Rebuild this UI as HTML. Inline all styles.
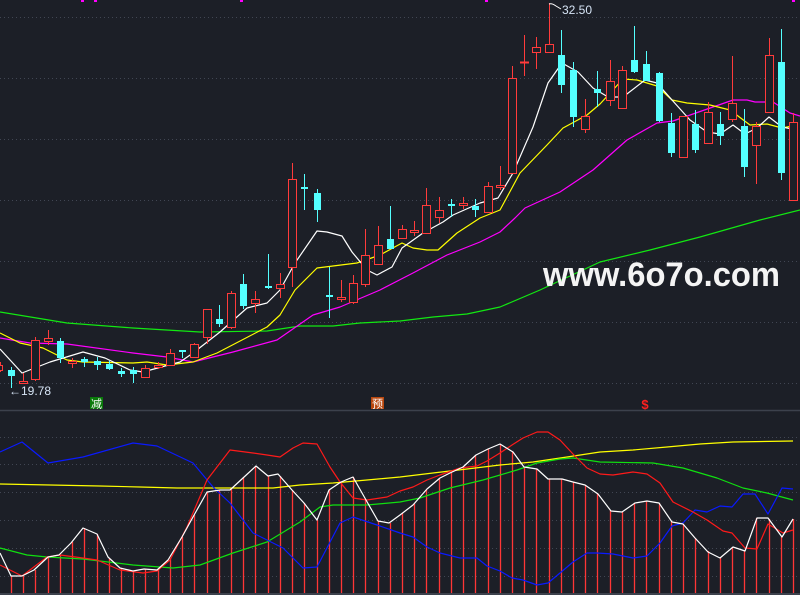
<!DOCTYPE html>
<html><head><meta charset="utf-8"><style>
html,body{margin:0;padding:0;background:#1c1f27;}
svg{display:block}
.g{stroke:#414653;stroke-width:1;stroke-dasharray:1 3}
.r line,.c line{stroke-width:1}
.r line{stroke:#ff3b3b}.r rect{fill:#1c1f27;stroke:#ff3b3b;stroke-width:1}
.c line{stroke:#54ffff}.c rect{fill:#54ffff}
.l{fill:none;stroke-width:1.2;stroke-linejoin:round}
.bars line{stroke:#ff3636;stroke-width:1.3}
</style></head><body>
<svg width="800" height="595" viewBox="0 0 800 595" xmlns="http://www.w3.org/2000/svg">
<rect width="800" height="595" fill="#1c1f27"/>
<g class="g">
<line x1="0" y1="17.5" x2="800" y2="17.5"/><line x1="0" y1="78.5" x2="800" y2="78.5"/><line x1="0" y1="139.5" x2="800" y2="139.5"/><line x1="0" y1="200.5" x2="800" y2="200.5"/><line x1="0" y1="261.5" x2="800" y2="261.5"/><line x1="0" y1="322.5" x2="800" y2="322.5"/><line x1="0" y1="383.5" x2="800" y2="383.5"/>
<line x1="0" y1="437.5" x2="800" y2="437.5"/><line x1="0" y1="464.5" x2="800" y2="464.5"/><line x1="0" y1="492.5" x2="800" y2="492.5"/><line x1="0" y1="520.5" x2="800" y2="520.5"/><line x1="0" y1="548.5" x2="800" y2="548.5"/><line x1="0" y1="576.5" x2="800" y2="576.5"/>
</g>
<line x1="0" y1="410.5" x2="800" y2="410.5" stroke="#3c414c" stroke-width="1.5"/>
<rect x="0" y="593" width="800" height="2" fill="#3c414c"/>
<g fill="#ff00ff"><rect x="81" y="0" width="3" height="2"/><rect x="94" y="0" width="3" height="2"/><rect x="240" y="0" width="3" height="2"/><rect x="485" y="0" width="3" height="2"/><rect x="792" y="0" width="3" height="2"/></g>

<polyline class="l" stroke="#12e812" points="0,312 67,323 133,328 200,332 267,331 300,326 333,326 360,323 400,321 433,317 467,314 500,307 540,290 600,262 650,250 700,237 760,220 800,210"/>
<polyline class="l" stroke="#ff00ff" points="0,338 30,343 67,344 133,353 167,357 193,362 233,352 277,340 313,315 340,307 380,290 413,273 447,255 480,242 500,232 515,218 525,208 560,192 593,170 627,140 657,123 673,121 713,107 733,100 747,100 755,102 773,102 790,113 800,116"/>
<polyline class="l" stroke="#ffff00" points="0,333 20,343 43,348 67,360 83,362 133,363 147,362 167,365 193,362 217,353 267,327 280,315 295,290 317,268 357,263 380,255 402,243 413,248 427,250 438,250 457,233 480,218 500,210 520,173 547,145 563,128 587,115 600,104 623,79 637,80 657,86 672,100 687,103 710,105 730,110 750,125 767,124 782,128 792,126"/>
<polyline class="l" stroke="#ffffff" points="0,349 22,373 50,362 83,352 105,358 130,370 143,372 165,366 180,362 193,353 220,332 247,308 267,303 280,290 295,263 317,231 327,232 342,236 352,252 367,270 377,275 392,267 402,248 423,233 443,222 453,215 480,203 498,198 513,173 533,127 548,83 562,63 578,72 593,88 608,97 623,97 645,80 657,83 672,100 690,120 707,132 720,134 733,125 745,134 757,128 769,117 782,127 792,129"/>

<g class="r"><line x1="0.5" y1="362" x2="0.5" y2="372"/><rect x="-5.5" y="365.5" width="8" height="5"/></g>
<g class="c"><line x1="11.5" y1="367" x2="11.5" y2="388"/><rect x="8" y="370" width="7" height="6"/></g>
<g class="r"><line x1="23.5" y1="373" x2="23.5" y2="383"/><rect x="19.5" y="381.5" width="8" height="2"/></g>
<g class="r"><line x1="35.5" y1="337" x2="35.5" y2="381"/><rect x="31.5" y="340.5" width="8" height="39"/></g>
<g class="r"><line x1="48.5" y1="330" x2="48.5" y2="345"/><rect x="44.5" y="338.5" width="8" height="3"/></g>
<g class="c"><line x1="60.5" y1="338" x2="60.5" y2="363"/><rect x="57" y="341" width="7" height="17"/></g>
<g class="r"><line x1="72.5" y1="358" x2="72.5" y2="368"/><rect x="68.5" y="361.5" width="8" height="2"/></g>
<g class="c"><line x1="84.5" y1="357" x2="84.5" y2="367"/><rect x="81" y="359" width="7" height="3"/></g>
<g class="c"><line x1="97.5" y1="357" x2="97.5" y2="370"/><rect x="94" y="361" width="7" height="4"/></g>
<g class="c"><line x1="109.5" y1="361" x2="109.5" y2="370"/><rect x="106" y="364" width="7" height="5"/></g>
<g class="c"><line x1="121.5" y1="368" x2="121.5" y2="377"/><rect x="118" y="371" width="7" height="3"/></g>
<g class="c"><line x1="133.5" y1="367" x2="133.5" y2="383"/><rect x="130" y="370" width="7" height="4"/></g>
<g class="r"><line x1="145.5" y1="365" x2="145.5" y2="377"/><rect x="141.5" y="368.5" width="8" height="9"/></g>
<g class="r"><line x1="158.5" y1="362" x2="158.5" y2="369"/><rect x="154.5" y="365.5" width="8" height="2"/></g>
<g class="r"><line x1="170.5" y1="349" x2="170.5" y2="366"/><rect x="166.5" y="353.5" width="8" height="12"/></g>
<g class="c"><line x1="182.5" y1="350" x2="182.5" y2="358"/><rect x="179" y="350" width="7" height="2"/></g>
<g class="r"><line x1="194.5" y1="343" x2="194.5" y2="357"/><rect x="190.5" y="344.5" width="8" height="13"/></g>
<g class="r"><line x1="207.5" y1="309" x2="207.5" y2="344"/><rect x="203.5" y="309.5" width="8" height="28"/></g>
<g class="c"><line x1="219.5" y1="305" x2="219.5" y2="327"/><rect x="216" y="319" width="7" height="5"/></g>
<g class="r"><line x1="231.5" y1="291" x2="231.5" y2="329"/><rect x="227.5" y="293.5" width="8" height="34"/></g>
<g class="c"><line x1="243.5" y1="274" x2="243.5" y2="309"/><rect x="240" y="284" width="7" height="22"/></g>
<g class="r"><line x1="255.5" y1="291" x2="255.5" y2="313"/><rect x="251.5" y="299.5" width="8" height="4"/></g>
<g class="c"><line x1="268.5" y1="254" x2="268.5" y2="289"/><rect x="265" y="286" width="7" height="2"/></g>
<g class="r"><line x1="280.5" y1="273" x2="280.5" y2="298"/><rect x="276.5" y="284.5" width="8" height="4"/></g>
<g class="r"><line x1="292.5" y1="163" x2="292.5" y2="287"/><rect x="288.5" y="179.5" width="8" height="88"/></g>
<g class="c"><line x1="304.5" y1="174" x2="304.5" y2="210"/><rect x="301" y="187" width="7" height="2"/></g>
<g class="c"><line x1="317.5" y1="189" x2="317.5" y2="222"/><rect x="314" y="193" width="7" height="17"/></g>
<g class="c"><line x1="329.5" y1="267" x2="329.5" y2="318"/><rect x="326" y="295" width="7" height="2"/></g>
<g class="r"><line x1="341.5" y1="280" x2="341.5" y2="302"/><rect x="337.5" y="297.5" width="8" height="2"/></g>
<g class="r"><line x1="353.5" y1="275" x2="353.5" y2="304"/><rect x="349.5" y="283.5" width="8" height="19"/></g>
<g class="r"><line x1="365.5" y1="229" x2="365.5" y2="287"/><rect x="361.5" y="255.5" width="8" height="29"/></g>
<g class="r"><line x1="378.5" y1="226" x2="378.5" y2="265"/><rect x="374.5" y="245.5" width="8" height="19"/></g>
<g class="c"><line x1="390.5" y1="206" x2="390.5" y2="249"/><rect x="387" y="239" width="7" height="10"/></g>
<g class="r"><line x1="402.5" y1="225" x2="402.5" y2="238"/><rect x="398.5" y="229.5" width="8" height="9"/></g>
<g class="r"><line x1="414.5" y1="221" x2="414.5" y2="236"/><rect x="410.5" y="230.5" width="8" height="2"/></g>
<g class="r"><line x1="426.5" y1="188" x2="426.5" y2="233"/><rect x="422.5" y="205.5" width="8" height="28"/></g>
<g class="r"><line x1="439.5" y1="197" x2="439.5" y2="223"/><rect x="435.5" y="210.5" width="8" height="7"/></g>
<g class="c"><line x1="451.5" y1="199" x2="451.5" y2="217"/><rect x="448" y="204" width="7" height="2"/></g>
<g class="r"><line x1="463.5" y1="197" x2="463.5" y2="209"/><rect x="459.5" y="203.5" width="8" height="2"/></g>
<g class="c"><line x1="475.5" y1="199" x2="475.5" y2="217"/><rect x="472" y="206" width="7" height="4"/></g>
<g class="r"><line x1="488.5" y1="182" x2="488.5" y2="213"/><rect x="484.5" y="186.5" width="8" height="26"/></g>
<g class="r"><line x1="500.5" y1="166" x2="500.5" y2="190"/><rect x="496.5" y="185.5" width="8" height="2"/></g>
<g class="r"><line x1="512.5" y1="66" x2="512.5" y2="173"/><rect x="508.5" y="78.5" width="8" height="95"/></g>
<g class="r"><line x1="524.5" y1="35" x2="524.5" y2="76"/><rect x="520.5" y="62" width="8" height="1"/></g>
<g class="r"><line x1="536.5" y1="37" x2="536.5" y2="69"/><rect x="532.5" y="47.5" width="8" height="5"/></g>
<g class="r"><line x1="549.5" y1="3" x2="549.5" y2="53"/><rect x="545.5" y="44.5" width="8" height="8"/></g>
<g class="c"><line x1="561.5" y1="30" x2="561.5" y2="93"/><rect x="558" y="55" width="7" height="30"/></g>
<g class="c"><line x1="573.5" y1="62" x2="573.5" y2="127"/><rect x="570" y="70" width="7" height="47"/></g>
<g class="r"><line x1="585.5" y1="99" x2="585.5" y2="133"/><rect x="581.5" y="116.5" width="8" height="13"/></g>
<g class="c"><line x1="597.5" y1="71" x2="597.5" y2="107"/><rect x="594" y="89" width="7" height="4"/></g>
<g class="r"><line x1="610.5" y1="60" x2="610.5" y2="106"/><rect x="606.5" y="81.5" width="8" height="19"/></g>
<g class="r"><line x1="622.5" y1="66" x2="622.5" y2="108"/><rect x="618.5" y="70.5" width="8" height="38"/></g>
<g class="c"><line x1="634.5" y1="26" x2="634.5" y2="73"/><rect x="631" y="60" width="7" height="12"/></g>
<g class="c"><line x1="646.5" y1="51" x2="646.5" y2="81"/><rect x="643" y="64" width="7" height="17"/></g>
<g class="c"><line x1="659.5" y1="72" x2="659.5" y2="122"/><rect x="656" y="73" width="7" height="48"/></g>
<g class="c"><line x1="671.5" y1="113" x2="671.5" y2="157"/><rect x="668" y="123" width="7" height="30"/></g>
<g class="r"><line x1="683.5" y1="116" x2="683.5" y2="157"/><rect x="679.5" y="116.5" width="8" height="41"/></g>
<g class="c"><line x1="695.5" y1="110" x2="695.5" y2="153"/><rect x="692" y="124" width="7" height="26"/></g>
<g class="r"><line x1="708.5" y1="102" x2="708.5" y2="143"/><rect x="704.5" y="112.5" width="8" height="31"/></g>
<g class="c"><line x1="720.5" y1="112" x2="720.5" y2="145"/><rect x="717" y="124" width="7" height="12"/></g>
<g class="r"><line x1="732.5" y1="56" x2="732.5" y2="122"/><rect x="728.5" y="103.5" width="8" height="16"/></g>
<g class="c"><line x1="744.5" y1="109" x2="744.5" y2="177"/><rect x="741" y="126" width="7" height="41"/></g>
<g class="r"><line x1="756.5" y1="122" x2="756.5" y2="184"/><rect x="752.5" y="126.5" width="8" height="19"/></g>
<g class="r"><line x1="769.5" y1="38" x2="769.5" y2="112"/><rect x="765.5" y="55.5" width="8" height="57"/></g>
<g class="c"><line x1="781.5" y1="29" x2="781.5" y2="180"/><rect x="778" y="62" width="7" height="111"/></g>
<g class="r"><line x1="793.5" y1="113" x2="793.5" y2="200"/><rect x="789.5" y="122.5" width="8" height="78"/></g>

<path d="M549,4 Q552,3 556,6 L561,9" fill="none" stroke="#ffffff" stroke-width="1"/>
<text x="562" y="14" font-family="Liberation Sans, sans-serif" font-size="12" fill="#d6e4f5">32.50</text>
<text x="9" y="395" font-family="Liberation Sans, sans-serif" font-size="12" fill="#d6e4f5">←19.78</text>

<text x="543" y="286" textLength="237" lengthAdjust="spacingAndGlyphs" font-family="Liberation Sans, sans-serif" font-weight="bold" font-size="34" fill="#f4f4f4">www.6o7o.com</text>

<rect x="90" y="397" width="13" height="12" fill="#0a7a0a"/>
<text x="96.5" y="407.5" text-anchor="middle" font-family="Liberation Sans, Noto Sans CJK SC, sans-serif" font-size="11" fill="#ffffff">减</text>
<rect x="371" y="397" width="13" height="12" fill="#b8470e"/>
<text x="377.5" y="407.5" text-anchor="middle" font-family="Liberation Sans, Noto Sans CJK SC, sans-serif" font-size="11" fill="#ffffff">预</text>
<text x="645" y="409" text-anchor="middle" font-family="Liberation Sans, sans-serif" font-weight="bold" font-size="13" fill="#ff2020">$</text>

<g class="bars">
<line x1="11.5" y1="576" x2="11.5" y2="593"/><line x1="23.5" y1="576" x2="23.5" y2="593"/><line x1="35.5" y1="570" x2="35.5" y2="593"/><line x1="48.5" y1="557" x2="48.5" y2="593"/><line x1="60.5" y1="555" x2="60.5" y2="593"/><line x1="72.5" y1="542" x2="72.5" y2="593"/><line x1="84.5" y1="528" x2="84.5" y2="593"/><line x1="97.5" y1="534" x2="97.5" y2="593"/><line x1="109.5" y1="558" x2="109.5" y2="593"/><line x1="121.5" y1="568" x2="121.5" y2="593"/><line x1="133.5" y1="571" x2="133.5" y2="593"/><line x1="145.5" y1="569" x2="145.5" y2="593"/><line x1="158.5" y1="570" x2="158.5" y2="593"/><line x1="170.5" y1="558" x2="170.5" y2="593"/><line x1="182.5" y1="537" x2="182.5" y2="593"/><line x1="194.5" y1="515" x2="194.5" y2="593"/><line x1="207.5" y1="492" x2="207.5" y2="593"/><line x1="219.5" y1="490" x2="219.5" y2="593"/><line x1="231.5" y1="489" x2="231.5" y2="593"/><line x1="243.5" y1="477" x2="243.5" y2="593"/><line x1="255.5" y1="467" x2="255.5" y2="593"/><line x1="268.5" y1="476" x2="268.5" y2="593"/><line x1="280.5" y1="476" x2="280.5" y2="593"/><line x1="292.5" y1="490" x2="292.5" y2="593"/><line x1="304.5" y1="503" x2="304.5" y2="593"/><line x1="317.5" y1="520" x2="317.5" y2="593"/><line x1="329.5" y1="490" x2="329.5" y2="593"/><line x1="341.5" y1="482" x2="341.5" y2="593"/><line x1="353.5" y1="477" x2="353.5" y2="593"/><line x1="365.5" y1="499" x2="365.5" y2="593"/><line x1="378.5" y1="521" x2="378.5" y2="593"/><line x1="390.5" y1="523" x2="390.5" y2="593"/><line x1="402.5" y1="513" x2="402.5" y2="593"/><line x1="414.5" y1="504" x2="414.5" y2="593"/><line x1="426.5" y1="490" x2="426.5" y2="593"/><line x1="439.5" y1="479" x2="439.5" y2="593"/><line x1="451.5" y1="473" x2="451.5" y2="593"/><line x1="463.5" y1="467" x2="463.5" y2="593"/><line x1="475.5" y1="455" x2="475.5" y2="593"/><line x1="488.5" y1="449" x2="488.5" y2="593"/><line x1="500.5" y1="444" x2="500.5" y2="593"/><line x1="512.5" y1="451" x2="512.5" y2="593"/><line x1="524.5" y1="467" x2="524.5" y2="593"/><line x1="536.5" y1="469" x2="536.5" y2="593"/><line x1="549.5" y1="479" x2="549.5" y2="593"/><line x1="561.5" y1="479" x2="561.5" y2="593"/><line x1="573.5" y1="482" x2="573.5" y2="593"/><line x1="585.5" y1="485" x2="585.5" y2="593"/><line x1="597.5" y1="493" x2="597.5" y2="593"/><line x1="610.5" y1="510" x2="610.5" y2="593"/><line x1="622.5" y1="512" x2="622.5" y2="593"/><line x1="634.5" y1="503" x2="634.5" y2="593"/><line x1="646.5" y1="501" x2="646.5" y2="593"/><line x1="659.5" y1="503" x2="659.5" y2="593"/><line x1="671.5" y1="521" x2="671.5" y2="593"/><line x1="683.5" y1="524" x2="683.5" y2="593"/><line x1="695.5" y1="538" x2="695.5" y2="593"/><line x1="708.5" y1="551" x2="708.5" y2="593"/><line x1="720.5" y1="558" x2="720.5" y2="593"/><line x1="732.5" y1="547" x2="732.5" y2="593"/><line x1="744.5" y1="551" x2="744.5" y2="593"/><line x1="756.5" y1="518" x2="756.5" y2="593"/><line x1="769.5" y1="519" x2="769.5" y2="593"/><line x1="781.5" y1="537" x2="781.5" y2="593"/><line x1="793.5" y1="519" x2="793.5" y2="593"/>
</g>

<polyline class="l" stroke="#ffff00" points="0,484 100,486 140,487 177,488 273,488 300,485 333,483 367,480 400,477 433,473 467,469 500,465 533,462 567,457 600,452 633,450 667,447 700,444 733,442 793,441"/>
<polyline class="l" stroke="#10e010" points="0,548 27,555 47,557 83,559 133,565 173,568 200,565 233,553 267,542 300,522 320,507 333,505 367,505 400,502 420,498 450,488 483,480 517,470 537,463 560,459 573,458 600,462 653,463 683,468 717,478 743,488 767,493 793,500"/>
<polyline class="l" stroke="#0a1aff" points="0,452 22,442 48,463 83,457 133,443 157,446 193,463 213,487 230,503 253,533 283,548 303,568 317,567 340,523 353,517 377,525 400,533 413,537 427,547 440,553 460,558 477,558 487,566 500,571 512,578 523,580 537,585 548,583 560,573 573,562 587,553 597,553 613,554 633,558 647,556 660,543 672,526 683,523 695,510 707,512 720,506 732,507 743,494 755,494 768,514 782,488 793,489"/>
<polyline class="l" stroke="#ff1a1a" points="0,565 22,576 47,557 60,555 83,558 97,560 120,570 143,573 157,571 170,560 187,527 207,480 230,450 253,453 267,455 280,457 293,448 303,443 317,444 330,467 340,482 353,498 367,500 387,497 400,491 413,487 427,480 440,475 460,468 477,466 487,461 500,453 512,445 523,438 537,432 548,432 560,440 573,454 587,468 600,474 613,475 633,472 647,474 660,483 673,502 693,512 707,520 723,531 732,533 745,548 757,549 768,524 783,533 793,530"/>
<polyline class="l" stroke="#ffffff" points="0,553 11,576 22,576 34,570 48,557 59,555 71,543 83,528 97,534 108,557 120,568 133,571 144,569 157,570 168,560 182,537 193,517 207,492 220,490 230,490 243,478 256,466 268,476 278,474 292,490 304,503 317,520 329,490 341,482 353,477 366,500 378,521 389,523 400,515 413,505 427,489 440,478 450,473 463,467 476,455 488,449 500,444 513,452 524,467 537,469 548,479 562,479 573,482 585,485 598,494 611,511 622,512 635,503 647,501 659,503 672,522 683,524 695,538 708,552 720,558 733,547 745,551 757,518 768,518 782,537 793,519"/>
</svg>
</body></html>
